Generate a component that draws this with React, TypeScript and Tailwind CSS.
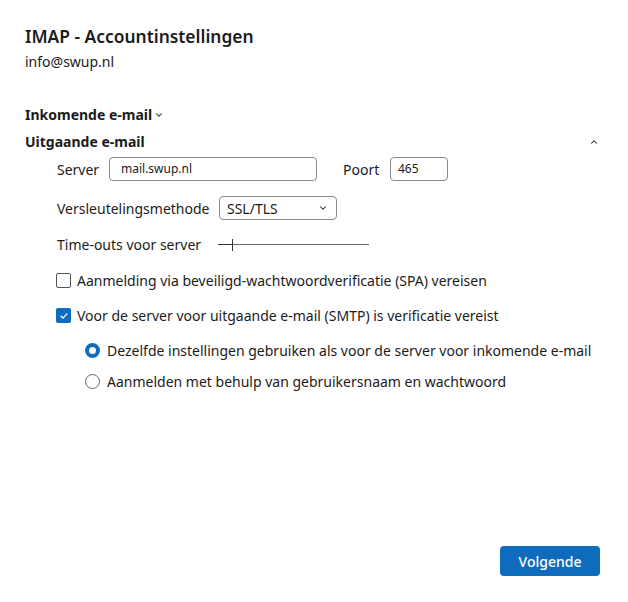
import { ChevronDown, ChevronUp } from 'lucide-react';

const font = { fontFamily: '"Noto Sans", "Open Sans", sans-serif' };

const App = () => {
  return (
    <div
      className="relative flex h-[602px] w-[628px] flex-col bg-white px-[25px] pt-[24px] text-[#1b1b1b]"
      style={font}>
      <h1 className="text-[17.4px] font-semibold leading-[24px]">IMAP - Accountinstellingen</h1>
      <p className="mt-[4px] text-[14px] leading-[20px]">info@swup.nl</p>

      <div className="mt-[33px] flex items-center text-[14px] font-bold leading-[20px]">
        Inkomende e-mail
        <ChevronDown className="ml-[2px] h-[10px] w-[10px]" strokeWidth={2.5} />
      </div>
      <div className="mt-[7px] flex items-center justify-between text-[14px] font-bold leading-[20px]">
        Uitgaande e-mail
        <ChevronUp className="mr-[4px] h-[10px] w-[10px]" strokeWidth={2.5} />
      </div>

      <div className="ml-[32px] mt-[5px] flex flex-col text-[14px]">
        <div className="flex items-center">
          <span className="w-[52px]">Server</span>
          <div className="flex h-[24px] w-[208px] items-center rounded-[4px] border border-[#8a8a8a] px-[11px] text-[12px]">
            mail.swup.nl
          </div>
          <span className="ml-[26px] w-[47px]">Poort</span>
          <div className="flex h-[24px] w-[58px] items-center rounded-[4px] border border-[#8a8a8a] px-[7px] text-[12px]">
            465
          </div>
        </div>

        <div className="mt-[15px] flex items-center">
          <span className="w-[162px]">Versleutelingsmethode</span>
          <div className="flex h-[24px] w-[118px] items-center justify-between rounded-[4px] border border-[#8a8a8a] pl-[7px] pr-[8px]">
            SSL/TLS
            <ChevronDown className="h-[10px] w-[10px]" strokeWidth={2.5} />
          </div>
        </div>

        <div className="mt-[14px] flex items-center">
          <span className="w-[161px]">Time-outs voor server</span>
          <div className="flex w-[151px] items-center">
            <div className="h-[1px] w-[14px] bg-[#333]" />
            <div className="h-[12px] w-[1px] bg-[#333]" />
            <div className="h-[1px] flex-1 bg-[#666]" />
          </div>
        </div>

        <div className="ml-[-1px] mt-[15px] flex items-center">
          <span className="h-[15px] w-[15px] rounded-[2px] border border-[#555]" />
          <span className="ml-[6px]">Aanmelding via beveiligd-wachtwoordverificatie (SPA) vereisen</span>
        </div>

        <div className="ml-[-1px] mt-[14px] flex items-center">
          <span className="flex h-[15px] w-[15px] items-center justify-center rounded-[2px] bg-[#0f6cbd]">
            <svg viewBox="0 0 12 12" className="h-[10px] w-[10px]" fill="none" stroke="white" strokeWidth="1.6" strokeLinecap="round" strokeLinejoin="round">
              <path d="M2.5 6.2l2.3 2.3 4.7-5" />
            </svg>
          </span>
          <span className="ml-[6px]">Voor de server voor uitgaande e-mail (SMTP) is verificatie vereist</span>
        </div>

        <div className="ml-[28px] mt-[14px] flex items-center">
          <span className="h-[15px] w-[15px] rounded-full border-[4px] border-[#0f6cbd] bg-white" />
          <span className="ml-[7px]">Dezelfde instellingen gebruiken als voor de server voor inkomende e-mail</span>
        </div>

        <div className="ml-[28px] mt-[10px] flex items-center">
          <span className="h-[15px] w-[15px] rounded-full border border-[#666]" />
          <span className="ml-[7px]">Aanmelden met behulp van gebruikersnaam en wachtwoord</span>
        </div>
      </div>

      <div className="mt-auto mb-[26px] flex justify-end pr-[3px]">
        <button className="h-[30px] w-[100px] rounded-[4px] bg-[#0f6cbd] text-[14px] font-medium text-white">
          Volgende
        </button>
      </div>
    </div>
  );
};

export default App;
